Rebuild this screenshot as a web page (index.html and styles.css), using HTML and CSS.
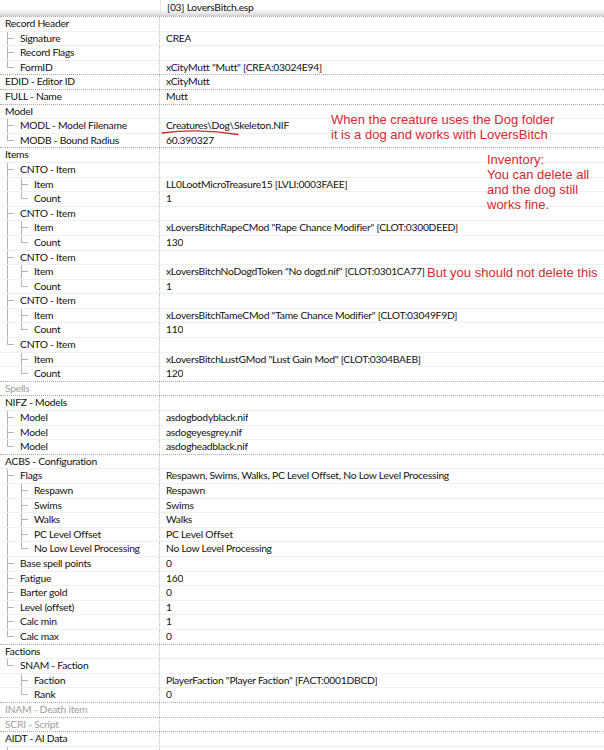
FILE: index.html
```html
<!DOCTYPE html>
<html lang="en">

<head>
  <meta charset="UTF-8">
  <title>[03] LoversBitch.esp</title>
  <link rel="stylesheet" href="styles.css">
</head>

<body>
  <div class="view">
    <div class="header">
      <div class="name"></div>
      <div class="value">[03] LoversBitch.esp</div>
    </div>

    <div class="rows">
      <!-- Record Header -->
      <div class="row top"><div class="name"><span class="label">Record Header</span></div><div class="value"></div></div>
      <div class="row"><div class="name"><i class="g tee"></i><span class="label">Signature</span></div><div class="value">CREA</div></div>
      <div class="row"><div class="name"><i class="g tee"></i><span class="label">Record Flags</span></div><div class="value"></div></div>
      <div class="row"><div class="name"><i class="g end"></i><span class="label">FormID</span></div><div class="value">xCityMutt "Mutt" [CREA:03024E94]</div></div>

      <div class="row top"><div class="name"><span class="label">EDID - Editor ID</span></div><div class="value">xCityMutt</div></div>
      <div class="row top"><div class="name"><span class="label">FULL - Name</span></div><div class="value">Mutt</div></div>

      <!-- Model -->
      <div class="row top"><div class="name"><span class="label">Model</span></div><div class="value"></div></div>
      <div class="row"><div class="name"><i class="g tee"></i><span class="label">MODL - Model Filename</span></div><div class="value">Creatures\Dog\Skeleton.NIF</div></div>
      <div class="row"><div class="name"><i class="g end"></i><span class="label">MODB - Bound Radius</span></div><div class="value">60.390327</div></div>

      <!-- Items -->
      <div class="row top"><div class="name"><span class="label">Items</span></div><div class="value"></div></div>
      <div class="row"><div class="name"><i class="g tee"></i><span class="label">CNTO - Item</span></div><div class="value"></div></div>
      <div class="row"><div class="name"><i class="g pipe"></i><i class="g tee"></i><span class="label">Item</span></div><div class="value">LL0LootMicroTreasure15 [LVLI:0003FAEE]</div></div>
      <div class="row"><div class="name"><i class="g pipe"></i><i class="g end"></i><span class="label">Count</span></div><div class="value">1</div></div>
      <div class="row"><div class="name"><i class="g tee"></i><span class="label">CNTO - Item</span></div><div class="value"></div></div>
      <div class="row"><div class="name"><i class="g pipe"></i><i class="g tee"></i><span class="label">Item</span></div><div class="value">xLoversBitchRapeCMod "Rape Chance Modifier" [CLOT:0300DEED]</div></div>
      <div class="row"><div class="name"><i class="g pipe"></i><i class="g end"></i><span class="label">Count</span></div><div class="value">130</div></div>
      <div class="row"><div class="name"><i class="g tee"></i><span class="label">CNTO - Item</span></div><div class="value"></div></div>
      <div class="row"><div class="name"><i class="g pipe"></i><i class="g tee"></i><span class="label">Item</span></div><div class="value">xLoversBitchNoDogdToken "No dogd.nif" [CLOT:0301CA77]</div></div>
      <div class="row"><div class="name"><i class="g pipe"></i><i class="g end"></i><span class="label">Count</span></div><div class="value">1</div></div>
      <div class="row"><div class="name"><i class="g tee"></i><span class="label">CNTO - Item</span></div><div class="value"></div></div>
      <div class="row"><div class="name"><i class="g pipe"></i><i class="g tee"></i><span class="label">Item</span></div><div class="value">xLoversBitchTameCMod "Tame Chance Modifier" [CLOT:03049F9D]</div></div>
      <div class="row"><div class="name"><i class="g pipe"></i><i class="g end"></i><span class="label">Count</span></div><div class="value">110</div></div>
      <div class="row"><div class="name"><i class="g end"></i><span class="label">CNTO - Item</span></div><div class="value"></div></div>
      <div class="row"><div class="name"><i class="g"></i><i class="g tee"></i><span class="label">Item</span></div><div class="value">xLoversBitchLustGMod "Lust Gain Mod" [CLOT:0304BAEB]</div></div>
      <div class="row"><div class="name"><i class="g"></i><i class="g end"></i><span class="label">Count</span></div><div class="value">120</div></div>

      <div class="row top off"><div class="name"><span class="label">Spells</span></div><div class="value"></div></div>

      <!-- Models -->
      <div class="row top"><div class="name"><span class="label">NIFZ - Models</span></div><div class="value"></div></div>
      <div class="row"><div class="name"><i class="g tee"></i><span class="label">Model</span></div><div class="value">asdogbodyblack.nif</div></div>
      <div class="row"><div class="name"><i class="g tee"></i><span class="label">Model</span></div><div class="value">asdogeyesgrey.nif</div></div>
      <div class="row"><div class="name"><i class="g end"></i><span class="label">Model</span></div><div class="value">asdogheadblack.nif</div></div>

      <!-- Configuration -->
      <div class="row top"><div class="name"><span class="label">ACBS - Configuration</span></div><div class="value"></div></div>
      <div class="row"><div class="name"><i class="g tee"></i><span class="label">Flags</span></div><div class="value">Respawn, Swims, Walks, PC Level Offset, No Low Level Processing</div></div>
      <div class="row"><div class="name"><i class="g pipe"></i><i class="g tee"></i><span class="label">Respawn</span></div><div class="value">Respawn</div></div>
      <div class="row"><div class="name"><i class="g pipe"></i><i class="g tee"></i><span class="label">Swims</span></div><div class="value">Swims</div></div>
      <div class="row"><div class="name"><i class="g pipe"></i><i class="g tee"></i><span class="label">Walks</span></div><div class="value">Walks</div></div>
      <div class="row"><div class="name"><i class="g pipe"></i><i class="g tee"></i><span class="label">PC Level Offset</span></div><div class="value">PC Level Offset</div></div>
      <div class="row"><div class="name"><i class="g pipe"></i><i class="g end"></i><span class="label">No Low Level Processing</span></div><div class="value">No Low Level Processing</div></div>
      <div class="row"><div class="name"><i class="g tee"></i><span class="label">Base spell points</span></div><div class="value">0</div></div>
      <div class="row"><div class="name"><i class="g tee"></i><span class="label">Fatigue</span></div><div class="value">160</div></div>
      <div class="row"><div class="name"><i class="g tee"></i><span class="label">Barter gold</span></div><div class="value">0</div></div>
      <div class="row"><div class="name"><i class="g tee"></i><span class="label">Level (offset)</span></div><div class="value">1</div></div>
      <div class="row"><div class="name"><i class="g tee"></i><span class="label">Calc min</span></div><div class="value">1</div></div>
      <div class="row"><div class="name"><i class="g end"></i><span class="label">Calc max</span></div><div class="value">0</div></div>

      <!-- Factions -->
      <div class="row top"><div class="name"><span class="label">Factions</span></div><div class="value"></div></div>
      <div class="row"><div class="name"><i class="g end"></i><span class="label">SNAM - Faction</span></div><div class="value"></div></div>
      <div class="row"><div class="name"><i class="g"></i><i class="g tee"></i><span class="label">Faction</span></div><div class="value">PlayerFaction "Player Faction" [FACT:0001DBCD]</div></div>
      <div class="row"><div class="name"><i class="g"></i><i class="g end"></i><span class="label">Rank</span></div><div class="value">0</div></div>

      <div class="row top off"><div class="name"><span class="label">INAM - Death item</span></div><div class="value"></div></div>
      <div class="row top off"><div class="name"><span class="label">SCRI - Script</span></div><div class="value"></div></div>
      <div class="row top"><div class="name"><span class="label">AIDT - AI Data</span></div><div class="value"></div></div>
      <div class="row"><div class="name"><i class="g tee"></i><span class="label"></span></div><div class="value"></div></div>
    </div>

    <!-- red notes drawn over the tree -->
    <svg class="scribble" width="90" height="12" viewBox="0 0 90 12">
      <path d="M2 6 Q 40 1 78 7.5" fill="none" stroke="#d42a32" stroke-width="1.4" stroke-linecap="round" />
    </svg>
    <div class="note note-dog">When the creature uses the Dog folder<br>it is a dog and works with LoversBitch</div>
    <div class="note note-inv">Inventory:<br>You can delete all<br>and the dog still<br>works fine.</div>
    <div class="note note-token">But you should not delete this</div>
  </div>
</body>

</html>
```

FILE: styles.css
```css
/* General Reset */
body,
html {
  margin: 0;
  padding: 0;
  background: #fff;
}

body {
  font-family: Lato, 'Open Sans', sans-serif;
  font-size: 10.3px;
  letter-spacing: -0.25px;
  color: #111;
  overflow: hidden;
}

.view {
  position: relative;
  width: 604px;
  height: 750px;
  overflow: hidden;
}

/* Column header */
.header {
  display: flex;
  height: 16px;
  box-sizing: border-box;
  background: linear-gradient(#ffffff 0%, #ffffff 60%, #f0f0f0 80%, #dcdcdc 100%);
  border-bottom: 1px solid #d4d4d4;
}

.header .name {
  width: 160px;
  flex: none;
  border-right: 1px solid #e4e4e4;
}

.header .value {
  padding-left: 6px;
  line-height: 14px;
}

/* Tree rows */
.row {
  display: flex;
  height: 14.6px;
  box-sizing: border-box;
  border-top: 1px solid #f0f0f0;
  line-height: 13.6px;
  white-space: nowrap;
}

.row.top {
  border-top: 1px dotted #a9a9a9;
}

.row.off {
  color: #a0a0a0;
}

.row .name {
  display: flex;
  width: 160px;
  flex: none;
  box-sizing: border-box;
  border-right: 1px dotted #c4c4c4;
  overflow: hidden;
}

.row .label {
  padding-left: 5px;
}

.row .g + .label {
  padding-left: 6px;
}

.row .value {
  padding-left: 6px;
  overflow: hidden;
}

/* Tree guide lines */
.g {
  display: block;
  width: 14px;
  flex: none;
  margin-top: -1px;
  height: 14.6px;
  background-repeat: no-repeat;
}

.g.pipe {
  background-image: linear-gradient(#b4b4b4, #b4b4b4);
  background-position: 7px 0;
  background-size: 1px 100%;
}

.g.tee {
  background-image: linear-gradient(#b4b4b4, #b4b4b4), linear-gradient(#b4b4b4, #b4b4b4);
  background-position: 7px 0, 7px 7px;
  background-size: 1px 100%, 7px 1px;
}

.g.end {
  background-image: linear-gradient(#b4b4b4, #b4b4b4), linear-gradient(#b4b4b4, #b4b4b4);
  background-position: 7px 0, 7px 7px;
  background-size: 1px 8px, 7px 1px;
}

/* Red notes */
.note {
  position: absolute;
  font-family: 'Liberation Sans', Arial, sans-serif;
  font-size: 13px;
  line-height: 15px;
  letter-spacing: 0;
  color: #d42a32;
  white-space: nowrap;
}

.note-dog {
  left: 331px;
  top: 112px;
}

.note-inv {
  left: 487px;
  top: 152px;
}

.note-token {
  left: 427px;
  top: 265px;
}

.scribble {
  position: absolute;
  left: 160px;
  top: 127px;
}
```
